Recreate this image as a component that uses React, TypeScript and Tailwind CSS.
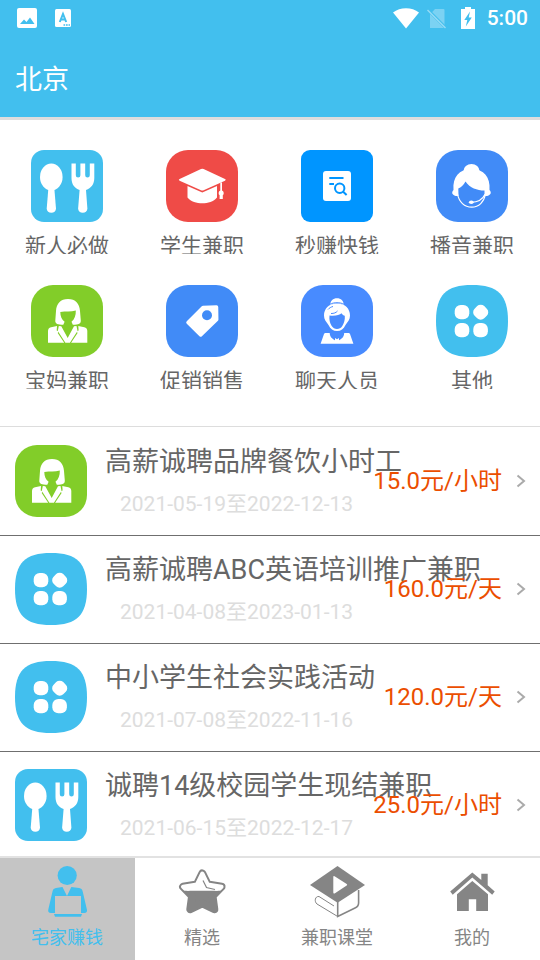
import type { ReactNode } from 'react';

type IconName =
  | 'cutlery'
  | 'graduate'
  | 'search'
  | 'headset'
  | 'mother'
  | 'tag'
  | 'chat'
  | 'other';

interface Job {
  icon: IconName;
  title: string;
  period: string;
  price: string;
}

const categories: { icon: IconName; label: string }[] = [
  { icon: 'cutlery', label: '新人必做' },
  { icon: 'graduate', label: '学生兼职' },
  { icon: 'search', label: '秒赚快钱' },
  { icon: 'headset', label: '播音兼职' },
  { icon: 'mother', label: '宝妈兼职' },
  { icon: 'tag', label: '促销销售' },
  { icon: 'chat', label: '聊天人员' },
  { icon: 'other', label: '其他' },
];

const jobs: Job[] = [
  {
    icon: 'mother',
    title: '高薪诚聘品牌餐饮小时工',
    period: '2021-05-19至2022-12-13',
    price: '15.0元/小时',
  },
  {
    icon: 'other',
    title: '高薪诚聘ABC英语培训推广兼职',
    period: '2021-04-08至2023-01-13',
    price: '160.0元/天',
  },
  {
    icon: 'other',
    title: '中小学生社会实践活动',
    period: '2021-07-08至2022-11-16',
    price: '120.0元/天',
  },
  {
    icon: 'cutlery',
    title: '诚聘14级校园学生现结兼职',
    period: '2021-06-15至2022-12-17',
    price: '25.0元/小时',
  },
];

const icons: Record<IconName, ReactNode> = {
  cutlery: (
    <>
      <rect width="72" height="72" rx="13" fill="#42bfee" />
      <g fill="#fff">
        <ellipse cx="20.3" cy="27" rx="11.3" ry="13.5" />
        <path d="M17.4 38h5.9L25 58.8a4.7 4.7 0 0 1-9.3 0Z" />
        <path d="M40.5 13.5h4.3v11.7a2.3 2.3 0 0 0 4.6 0V13.5h4.8v11.7a2.3 2.3 0 0 0 4.6 0V13.5h4.5V28c0 6.5-3.3 10-8.3 12l1.4 18.8a4.7 4.7 0 0 1-9.3 0L48.6 40c-5-2-8.1-5.5-8.1-12Z" />
      </g>
    </>
  ),
  graduate: (
    <>
      <rect width="72" height="72" rx="22" fill="#ef4b47" />
      <g fill="#fff">
        <path d="M35 19.1q1.3-.6 2.6 0L59 29q1.6.8 0 1.7L37.6 40.2q-1.3.6-2.6 0L13.6 30.7q-1.6-.9 0-1.7Z" />
        <path d="M21.5 36 36.3 42.6 51 36v11.5C47.5 51.6 42 53.3 36.3 53.3S25 51.6 21.5 47.5Z" />
        <path d="M54.3 32.5h1.7v8a2.8 2.8 0 0 1 .8 4.7V49h-3.2v-3.8a2.8 2.8 0 0 1 .7-4.7Z" />
      </g>
    </>
  ),
  search: (
    <>
      <rect width="72" height="72" rx="9" fill="#0095ff" />
      <rect x="22" y="21" width="28" height="30" rx="3" fill="#fff" />
      <g fill="none" stroke="#0095ff" strokeWidth="2">
        <path d="M28.3 28h14.2M28.3 34h4.7" />
        <circle cx="38.7" cy="38.3" r="4.7" />
        <path d="m42.2 41.7 3.4 3.3" />
      </g>
    </>
  ),
  headset: (
    <>
      <rect width="72" height="72" rx="22" fill="#418bf7" />
      <g fill="#fff">
        <ellipse cx="35.5" cy="21" rx="8" ry="7" />
        <path d="M22.5 46c-5.500.5-8-3-5-6C16.500 27 23 19 35.500 19S54.500 27 53.500 40c3 3 .5 6.500-5 6V40.500C41 40.500 34 38 29.500 31.500 27.500 35 25 37.500 22.300 38.500Z" />
        <ellipse cx="35.300" cy="52.300" rx="2.400" ry="1.800" />
      </g>
      <g fill="none" stroke="#fff" strokeWidth="1.200">
        <path d="M21.500 44c1.500 8 7 13.200 14.200 13.200S48 52 49.500 44" />
        <path d="M35 52.300c7 0 11.500-2.300 14-8" />
      </g>
    </>
  ),
  mother: (
    <>
      <rect width="72" height="72" rx="22" fill="#82cd29" />
      <g fill="#fff">
        <path d="M37 14c7.500 0 11.500 4.500 12 12l.8 9.500c.2 3.200-2 4.300-8 4.300l-1.300-3c3-2.500 4.500-6.300 4.300-11.300-5 1.400-10 .7-15.500 1.500 0 4.500 1.500 7.500 4.300 9.800L32.300 39.800c-5.500 0-8.300-1-8-4.300l.7-9.500c.5-7.500 4.500-12 12-12Z" />
        <path d="M17 57.700V46c0-2 1-3 3-3.700l6-1.300-.3 4.500 2 1-1 1.500 6.500 9.700Z" />
        <path d="M56.300 57.700V46c0-2-1-3-3-3.700l-6-1.300.3 4.500-2 1 1 1.500-6.500 9.700Z" />
        <path d="m27.800 41 2.500.3 6.400 11.700L43 41.300l2.500-.3 1 5-7.600 11.700h-4.500L26.800 46Z" />
      </g>
    </>
  ),
  tag: (
    <>
      <rect width="72" height="72" rx="22" fill="#418bf7" />
      <path
        d="m22 37.400 15-15 13.500-.4.200 12.500-16 15.500Z"
        fill="#fff"
        stroke="#fff"
        strokeWidth="3.500"
        strokeLinejoin="round"
      />
      <circle cx="41" cy="30.300" r="5" fill="#418bf7" />
    </>
  ),
  chat: (
    <>
      <rect width="72" height="72" rx="22" fill="#488bff" />
      <g fill="#fff">
        <path d="M29 20.300c.5-4.500 3-7 7-7s6.500 2.500 7 7c-4-2.700-10-2.700-14 0Z" />
        <path d="M36 18.500c8.500 0 13 5.500 13 12 0 4-2 6-4.500 9.500C42.500 44 40 46 36 46s-6.500-2-8.500-6c-2.500-3.500-4.500-5.500-4.500-9.500 0-6.500 4.500-12 13-12Z" />
        <path d="M19.600 58.700 23 49q.4-1 1.500-1h4.200c.2 4 2.700 6.500 7.300 8 4.600-1.500 7-4 7.200-8h4.300q1.100 0 1.500 1l3.400 9.700Z" />
      </g>
      <path
        d="M28.500 30.500c5.500.7 10-.3 12-2.300 1 1.700 2 2.200 3.300 2.500.3 4-.7 7.300-2.500 10.300-1.500 2.300-3 3-5.300 3s-4-1-5.300-3c-1.800-3-2.700-6.500-2.200-10.500Z"
        fill="#488bff"
      />
      <path
        d="M27 24.500c1.500-1.700 3-2.500 5-3M30 28.500c3 0 5-.7 6.500-2.500M29 19.200c4-2 10-2 14 0"
        fill="none"
        stroke="#488bff"
      />
      <path d="m34 53 2 1.300L38 53v3.500h-4Z" fill="#fff" />
    </>
  ),
  other: (
    <>
      <path d="M36 0C62 0 72 10 72 36S62 72 36 72 0 62 0 36 10 0 36 0Z" fill="#42bfee" />
      <g fill="#fff">
        <rect x="18.700" y="20" width="14.600" height="14.300" rx="6" />
        <rect x="37.900" y="20.400" width="13.600" height="13.600" rx="5" transform="rotate(45 44.700 27.200)" />
        <rect x="18.700" y="38" width="14.600" height="14.300" rx="6" />
        <rect x="37.300" y="38" width="14.600" height="14.300" rx="6" />
      </g>
    </>
  ),
};

function AppIcon({ name }: { name: IconName }) {
  return (
    <svg viewBox="0 0 72 72" className="size-[72px] shrink-0" aria-hidden="true">
      {icons[name]}
    </svg>
  );
}

const starPath =
  'm28.300 9.500 5.400 11 13.800 2.300-9 9.200 1.800 13.200-12-5.700-12 5.700L18.100 32l-9-9.200 13.800-2.300Z';

const tabs: { label: string; icon: ReactNode }[] = [
  {
    label: '宅家赚钱',
    icon: (
      <g fill="currentColor">
        <circle cx="28.200" cy="11.500" r="9.600" />
        <path d="m23.500 23 4.500 9h-12v17h-4c-2.300 0-3.200-1.500-2.700-3.500l4.200-18c.5-2 1.500-3 3.500-3.400Z" />
        <path d="m32.300 23-4.300 9h14v17h3.300c2.300 0 3.100-1.500 2.600-3.500l-4.200-18c-.5-2-1.500-3-3.500-3.400Z" />
        <path d="M15 50h28l-1 2.800H16Z" />
      </g>
    ),
  },
  {
    label: '精选',
    icon: (
      <>
        <clipPath id="star-top">
          <rect width="57" height="26.700" />
        </clipPath>
        <path d={starPath} fill="currentColor" stroke="currentColor" strokeWidth="8" strokeLinejoin="round" />
        <g clipPath="url(#star-top)">
          <path d={starPath} fill="#fff" stroke="#fff" strokeWidth="4" strokeLinejoin="round" />
        </g>
        <path d="m29 16.500 3.500 7 8.500 2" fill="none" stroke="currentColor" strokeWidth="1.200" />
      </>
    ),
  },
  {
    label: '兼职课堂',
    icon: (
      <>
        <path d="M28.500 2 56 21 28.600 38.800 1 21Z" fill="currentColor" />
        <path d="M24.300 13q0-1.500 1.300-.8L37.700 20q1 .7 0 1.400l-12.100 8q-1.300.7-1.300-.8Z" fill="#fff" />
        <g fill="none" stroke="currentColor">
          <path d="M28.700 38v14.500L46 44q3.600-1.600 3.600-5V26" strokeWidth="1.600" />
          <path d="M28.700 52.500 8 40c-3-2.500-2-8 2-7.500L25 42" />
        </g>
      </>
    ),
  },
  {
    label: '我的',
    icon: (
      <g fill="currentColor">
        <path d="M28.300 8.500 37.300 16V9.700h6.400v11.600l7 6.200-2.500 3.200-19.900-17.200L8.700 30.700l-2.500-3.200Z" />
        <path d="M28.300 17 44 30.300V47H32.200V35.200h-7.400V47H13V30.300Z" />
      </g>
    ),
  },
];

function StatusBar() {
  return (
    <div className="flex h-9 items-center justify-between pr-3 pl-[17px]">
      <div className="flex items-center gap-[18px]">
        <svg viewBox="0 0 20 20" className="size-5" aria-hidden="true">
          <rect width="20" height="20" rx="2" fill="#fff" />
          <path d="m3 16 4-4.500 2.500 2.500 3.500-4.500 4.500 6.500Z" fill="#42bfee" />
        </svg>
        <svg viewBox="0 0 16 18" className="h-[18px] w-4" aria-hidden="true">
          <rect width="16" height="18" rx="1.500" fill="#fff" />
          <path d="m4.800 13 3.200-8 3.200 8M6 10.500h4" fill="none" stroke="#42bfee" strokeWidth="2" />
          <path d="M8.500 16h6.500" stroke="#42bfee" strokeWidth="1.500" strokeDasharray="1.700 .8" />
        </svg>
      </div>
      <div className="flex items-center">
        <svg viewBox="0 0 26 21" className="h-[21px] w-[26px]" aria-hidden="true">
          <path d="M0 4.500C7-1.300 19-1.300 26 4.500L13 20.500Z" fill="#fff" />
        </svg>
        <svg viewBox="0 0 20 21" className="ml-2 h-[21px] w-5" aria-hidden="true">
          <path d="M8 1h8.500q1 0 1 1v18H3V6.500Z" fill="#fff" opacity=".3" />
          <path d="m1 2 18 18" stroke="#42bfee" strokeWidth="3" />
          <path d="m.5 2 18 18" stroke="#fff" strokeOpacity=".45" strokeWidth="1.400" />
        </svg>
        <svg viewBox="0 0 14 22" className="ml-[14px] h-[22px] w-[14px]" aria-hidden="true">
          <path d="M4 0h6v2h4v20H0V2h4Z" fill="#fff" />
          <path d="M9 4.500 3.300 13h3L4.800 19.500l6-9H7.700Z" fill="#42bfee" />
        </svg>
        <span className="ml-3 text-[21px] leading-9 font-medium">5:00</span>
      </div>
    </div>
  );
}

function JobRow({ job }: { job: Job }) {
  return (
    <li className="border-t border-[#6f6f6f] first:border-transparent">
      <a href="#job" className="relative flex h-[107px] items-center px-[15px] pb-px">
        <AppIcon name={job.icon} />
        <div className="ml-[18px] whitespace-nowrap">
          <h2 className="text-[27px] leading-10 text-[#666]">{job.title}</h2>
          <p className="mt-[6px] ml-[15px] text-[21px] leading-8 text-[#ddd]">{job.period}</p>
        </div>
        {/* price sits over the end of long titles */}
        <div className="absolute inset-y-0 right-[14px] flex items-center gap-[14px] pb-px">
          <span className="text-2xl text-[#eb4e00]">{job.price}</span>
          <svg viewBox="0 0 10 14" className="h-[14px] w-[10px]" aria-hidden="true">
            <path d="m1.500 1.500 6.500 5.500-6.500 5.500" fill="none" stroke="#aaa" strokeWidth="2" />
          </svg>
        </div>
      </a>
    </li>
  );
}

export default function App() {
  return (
    <div className="flex h-dvh flex-col bg-white font-[Roboto,'Noto_Sans_CJK_SC',sans-serif]">
      <header className="shrink-0 border-b-3 border-[#ddd] bg-[#42bfee] text-white">
        <StatusBar />
        <h1 className="px-[15px] pt-6 pb-[17px] text-[27px] leading-10">北京</h1>
      </header>

      <main className="min-h-0 flex-1 overflow-y-auto [scrollbar-width:none]">
        <nav className="grid grid-cols-4 gap-y-[31px] border-b border-[#ddd] pt-[30px] pb-[37px]">
          {categories.map(({ icon, label }) => (
            <a key={label} href="#category" className="flex flex-col items-center pr-px">
              <AppIcon name={icon} />
              <span className="mt-2 h-6 overflow-hidden text-[21px] leading-8 text-[#666]">
                {label}
              </span>
            </a>
          ))}
        </nav>
        <ul>
          {jobs.map((job) => (
            <JobRow key={job.title} job={job} />
          ))}
        </ul>
      </main>

      <nav className="grid shrink-0 grid-cols-4 border-t-2 border-[#e2e2e2]">
        {tabs.map(({ label, icon }, index) => (
          <button
            key={label}
            type="button"
            aria-current={index === 0 ? 'page' : undefined}
            className={`flex flex-col items-center pt-[6px] pr-px pb-2 ${
              index === 0 ? 'bg-[#c5c5c5] text-[#42bfee]' : 'text-[#858585]'
            }`}
          >
            <svg viewBox="0 0 57 54" className="h-[54px] w-[57px]" aria-hidden="true">
              {icon}
            </svg>
            <span className="mt-[6px] text-lg leading-7">{label}</span>
          </button>
        ))}
      </nav>
    </div>
  );
}
